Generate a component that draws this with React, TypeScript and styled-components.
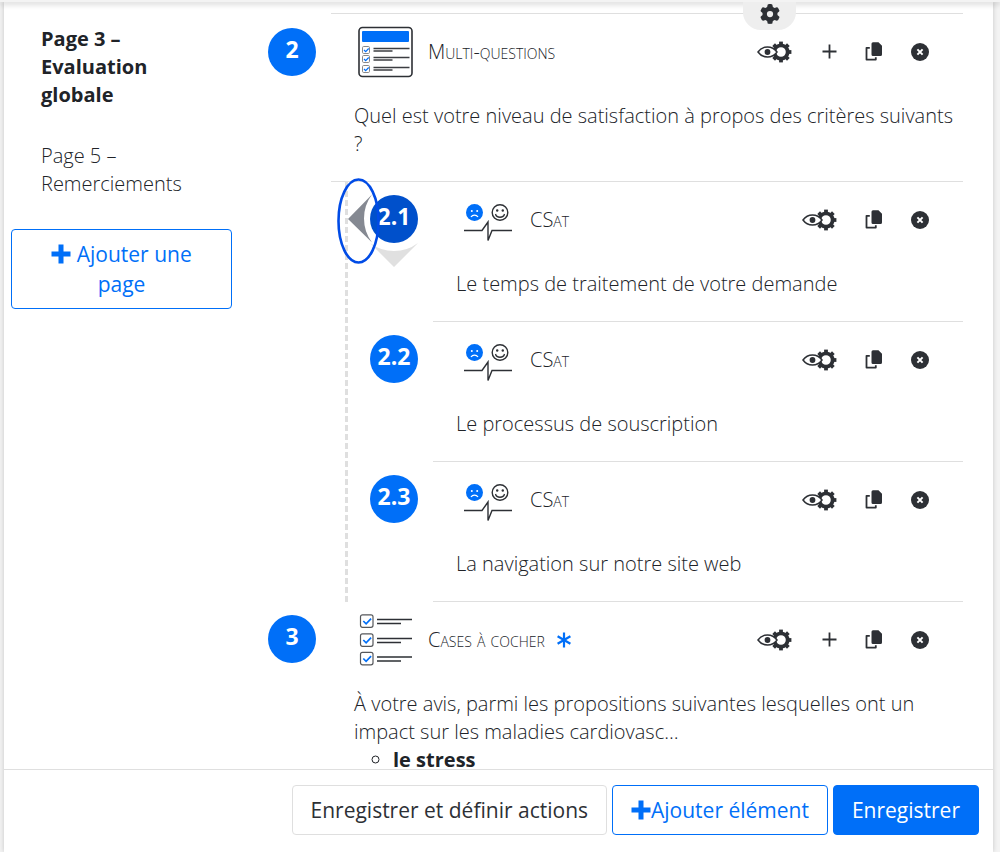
import React from 'react';
import styled, { createGlobalStyle } from 'styled-components';
import { FaGear } from 'react-icons/fa6';

const blue = '#006ff8';
const ink = '#2d3035';
const line = '#dfdfdf';

const GlobalStyle = createGlobalStyle`
  *, *::before, *::after { box-sizing: border-box; }
  body {
    margin: 0;
    background: #f3f3f3;
    color: #202328;
    font: 300 20px/28px "Open Sans", "Liberation Sans", sans-serif;
  }
  h3, p, ul, ol { margin: 0; padding: 0; }
  ol { list-style: none; }
  button { font-family: inherit; cursor: pointer; }
`;

const Shell = styled.div`
  display: flex;
  flex-direction: column;
  height: 100vh;
  overflow: hidden;
`;

const TopBar = styled.header`
  position: relative;
  z-index: 2;
  flex: none;
  height: 2px;
  background: #f3f3f3;
  box-shadow: 0 1px 6px rgba(0, 0, 0, 0.4);
`;

const Panel = styled.div`
  position: relative;
  display: flex;
  flex-direction: column;
  flex: 1;
  min-height: 0;
  margin: 0 7px 0 4px;
  background: #fff;
  box-shadow: 0 0 5px rgba(0, 0, 0, 0.18);
`;

const Body = styled.div`
  display: flex;
  flex: 1;
  min-height: 0;
  overflow: hidden;
`;

const Sidebar = styled.nav`
  flex: none;
  width: 264px;
  padding: 23px 36px 0 7px;
`;

const PageList = styled.ol`
  display: grid;
  gap: 33px;
  padding: 0 36px 0 30px;
  margin-bottom: 31px;
`;

const PageLink = styled.a<{ $current?: boolean }>`
  display: block;
  color: inherit;
  text-decoration: none;
  font-weight: ${(p) => (p.$current ? 700 : 'inherit')};
`;

const Button = styled.button<{ $kind: 'plain' | 'outline' | 'solid'; $wide?: boolean }>`
  width: ${(p) => (p.$wide ? '100%' : 'auto')};
  padding: 9px ${(p) => (p.$wide ? 30 : 18)}px;
  border: 1px solid ${(p) => (p.$kind === 'plain' ? line : blue)};
  border-radius: 4px;
  background: ${(p) => (p.$kind === 'solid' ? blue : '#fff')};
  color: ${(p) => ({ plain: ink, outline: blue, solid: '#fff' })[p.$kind]};
  font-size: 21px;
  font-weight: 400;
  line-height: 30px;
  svg { vertical-align: -2px; }
`;

const Questions = styled.main`
  flex: 1;
  min-width: 0;
  padding: 11px 30px 0 0;
`;

const Row = styled.li`
  display: grid;
  grid-template-columns: 48px minmax(0, 1fr);
  column-gap: 15px;
`;

const Badge = styled.div<{ $active?: boolean; $first?: boolean }>`
  position: relative;
  width: 48px;
  height: 48px;
  margin-top: ${(p) => (p.$first ? 15 : 13)}px;
  border-radius: 50%;
  background: ${(p) => (p.$active ? '#0050cb' : blue)};
  color: #fff;
  font-size: 23px;
  font-weight: 700;
  line-height: 42px;
  text-align: center;
`;

const Marker = styled.svg`
  position: absolute;
  left: -34px;
  top: -18px;
  overflow: visible;
`;

const Block = styled.section<{ $topLine?: boolean }>`
  padding: 0 0 23px 23px;
  border-bottom: 1px solid ${line};
  border-top: ${(p) => (p.$topLine ? `1px solid ${line}` : '0')};
`;

const BlockHead = styled.div`
  display: flex;
  align-items: center;
  height: 75px;
  margin-bottom: 13px;
  padding-right: 21px;
`;

const TypeIcon = styled.span`
  display: flex;
  justify-content: center;
  width: 64px;
  margin-right: 10px;
`;

const Title = styled.h3`
  display: flex;
  align-items: center;
  gap: 12px;
  flex: 1;
  font-size: 20px;
  font-weight: 300;
  font-variant: small-caps;
`;

const Action = styled.button<{ $wide?: boolean }>`
  display: flex;
  align-items: center;
  justify-content: center;
  width: ${(p) => (p.$wide ? 65 : 45)}px;
  height: 32px;
  padding: 0;
  border: 0;
  background: none;
  color: ${ink};
`;

const Children = styled.ol`
  margin-left: 14px;
  padding-left: 22px;
  border-left: 3px dashed ${line};
`;

const Bullets = styled.ul`
  padding-left: 39px;
  list-style: circle;
  font-weight: 700;
`;

const SettingsTab = styled.button`
  position: absolute;
  z-index: 3;
  top: 0;
  right: 197px;
  display: flex;
  justify-content: center;
  align-items: flex-start;
  width: 53px;
  height: 28px;
  padding: 2px 0 0;
  border: 0;
  border-radius: 0 0 18px 18px;
  background: #eee;
  color: ${ink};
`;

const Footer = styled.footer`
  display: flex;
  flex: none;
  justify-content: flex-end;
  gap: 5px;
  padding: 15px 14px 17px;
  border-top: 1px solid ${line};
`;

const BoldPlus = () => (
  <svg width="20" height="20" viewBox="0 0 20 20" fill="currentColor" aria-hidden="true">
    <path d="M7.500.5h5v7h7v5h-7v7h-5v-7h-7v-5h7z" />
  </svg>
);

const Asterisk = () => (
  <svg width="14" height="16" viewBox="0 0 14 16" stroke={blue} strokeWidth="2.200" role="img" aria-label="Obligatoire">
    <path d="M7 .5v15M.6 4.200l12.800 7.600M13.400 4.200L.6 11.800" />
  </svg>
);

const EyeGear = () => (
  <svg width="35" height="22" viewBox="0 0 35 22" fill="none" aria-hidden="true">
    <g transform="translate(24 11)" stroke={ink}>
      <circle r="6.700" strokeWidth="3.800" />
      {[0, 45, 90, 135, 180, 225, 270, 315].map((a) => (
        <path key={a} d="M0-7V-10.400" strokeWidth="3.800" transform={`rotate(${a})`} />
      ))}
    </g>
    <path d="M1 11C5.800 4.300 15.200 4.300 20 11C15.200 17.700 5.800 17.700 1 11z" fill="#fff" stroke={ink} strokeWidth="1.500" />
    <circle cx="10.500" cy="11" r="2.900" fill={ink} />
  </svg>
);

const ThinPlus = () => (
  <svg width="15" height="15" viewBox="0 0 15 15" stroke="currentColor" strokeWidth="1.800" aria-hidden="true">
    <path d="M7.500.5v14M.5 7.500h14" />
  </svg>
);

const Copy = () => (
  <svg width="19" height="19" viewBox="0 0 19 19" aria-hidden="true">
    <path d="M8 .3h5.500L17 3.800v8.700a1.500 1.500 0 0 1-1.500 1.500H8a1.500 1.500 0 0 1-1.500-1.500V1.800A1.500 1.500 0 0 1 8 .3z" fill="currentColor" />
    <path d="M4.800 5.800H1.500v11.800h9.300v-2.300" fill="none" stroke="currentColor" strokeWidth="1.800" strokeLinejoin="round" />
  </svg>
);

const Remove = () => (
  <svg width="18" height="18" viewBox="0 0 18 18" aria-hidden="true">
    <circle cx="9" cy="9" r="9" fill="currentColor" />
    <path d="M6.400 6.400l5.200 5.200M11.600 6.400l-5.200 5.200" stroke="#fff" strokeWidth="2" />
  </svg>
);

const MultiIcon = () => (
  <svg width="56" height="52" viewBox="0 0 56 52" fill="none" aria-hidden="true">
    <rect x="1" y="1.500" width="53" height="49" rx="3.500" stroke={ink} strokeWidth="1.600" />
    <rect x="4" y="5" width="47" height="11" rx="1" fill={blue} />
    {[20, 29, 39].map((y) => (
      <g key={y}>
        <rect x="4.500" y={y + 0.5} width="7" height="7" rx="1.200" stroke="#888" />
        <path d={`M6 ${y + 4}l1.700 1.700l3-3.200`} stroke={blue} strokeWidth="1.200" />
        <path d={`M15.500 ${y + 2.5}h36M15.500 ${y + 5}h19`} stroke="#3c3e42" strokeWidth="1.300" />
      </g>
    ))}
  </svg>
);

const CheckIcon = () => (
  <svg width="54" height="52" viewBox="0 0 54 52" fill="none" aria-hidden="true">
    {[0.5, 19.5, 38].map((y) => (
      <g key={y}>
        <rect x="1.500" y={y + 0.300} width="12.500" height="12.500" rx="2" stroke="#55575b" strokeWidth="1.200" />
        <path d={`M4.300 ${y + 6.500}l2.800 2.800l5-5.200`} stroke={blue} strokeWidth="1.700" />
        <path d={`M18 ${y + 5}h35M18 ${y + 9}h24`} stroke={ink} strokeWidth="1.400" />
      </g>
    ))}
  </svg>
);

const CsatIcon = () => (
  <svg width="48" height="44" viewBox="0 0 48 44" fill="none" aria-hidden="true">
    <circle cx="10.500" cy="14.500" r="8.500" fill={blue} />
    <g fill="#fff"><circle cx="7.800" cy="13" r="1" /><circle cx="13.200" cy="13" r="1" /></g>
    <path d="M7 19c1.600-2.500 5.400-2.500 7 0" stroke="#fff" strokeWidth="1.200" />
    <circle cx="36" cy="14.500" r="7.800" stroke={ink} strokeWidth="1.400" />
    <g fill={ink}><circle cx="33.200" cy="12.500" r="1.200" /><circle cx="38.800" cy="12.500" r="1.200" /></g>
    <path d="M31.500 16c1 4.300 8 4.300 9 0" stroke={ink} strokeWidth="1.300" />
    <path d="M0 32.500h18l6-8.500v18.500l4-10h20" stroke={ink} strokeWidth="1.400" />
  </svg>
);

const MoveMarker = () => (
  <Marker width="84" height="92" viewBox="0 0 84 92" fill="none" aria-hidden="true">
    <path d="M12 42L36 17.500A40 40 0 0 0 36 65.500z" fill="#858992" />
    <path d="M58 90L34 66A40 40 0 0 0 82 66z" fill="#e0e0e0" />
    <ellipse cx="22.500" cy="44" rx="20" ry="41.500" stroke="#004be6" strokeWidth="2.600" />
  </Marker>
);

interface BlockProps {
  title: string;
  text: string;
  icon: React.ReactNode;
  canAdd?: boolean;
  required?: boolean;
  topLine?: boolean;
  children?: React.ReactNode;
}

const QuestionBlock = ({ title, text, icon, canAdd, required, topLine, children }: BlockProps) => (
  <Block $topLine={topLine}>
    <BlockHead>
      <TypeIcon>{icon}</TypeIcon>
      <Title>{title}{required && <Asterisk />}</Title>
      <Action type="button" $wide aria-label="Conditions d'affichage"><EyeGear /></Action>
      {canAdd && <Action type="button" aria-label="Ajouter"><ThinPlus /></Action>}
      <Action type="button" aria-label="Dupliquer"><Copy /></Action>
      <Action type="button" aria-label="Supprimer"><Remove /></Action>
    </BlockHead>
    <p>{text}</p>
    {children}
  </Block>
);

const criteria = [
  'Le temps de traitement de votre demande',
  'Le processus de souscription',
  'La navigation sur notre site web',
];

export default function App() {
  return (
    <Shell>
      <GlobalStyle />
      <TopBar />
      <Panel>
        <SettingsTab type="button" aria-label="Paramètres"><FaGear size={20} /></SettingsTab>
        <Body>
          <Sidebar>
            <PageList>
              <li><PageLink href="#page-3" $current>Page 3 – Evaluation globale</PageLink></li>
              <li><PageLink href="#page-5">Page 5 – Remerciements</PageLink></li>
            </PageList>
            <Button type="button" $kind="outline" $wide><BoldPlus /> Ajouter une page</Button>
          </Sidebar>
          <Questions>
            <ol>
              <Row>
                <Badge $first>2</Badge>
                <div>
                  <QuestionBlock
                    title="Multi-questions"
                    text="Quel est votre niveau de satisfaction à propos des critères suivants ?"
                    icon={<MultiIcon />}
                    canAdd
                    topLine
                  />
                  <Children>
                    {criteria.map((text, i) => (
                      <Row key={text}>
                        <Badge $active={i === 0}>
                          2.{i + 1}
                          {i === 0 && <MoveMarker />}
                        </Badge>
                        <QuestionBlock title="CSat" text={text} icon={<CsatIcon />} />
                      </Row>
                    ))}
                  </Children>
                </div>
              </Row>
              <Row>
                <Badge>3</Badge>
                <QuestionBlock
                  title="Cases à cocher"
                  text="À votre avis, parmi les propositions suivantes lesquelles ont un impact sur les maladies cardiovasc…"
                  icon={<CheckIcon />}
                  canAdd
                  required
                >
                  <Bullets><li>le stress</li></Bullets>
                </QuestionBlock>
              </Row>
            </ol>
          </Questions>
        </Body>
        <Footer>
          <Button type="button" $kind="plain">Enregistrer et définir actions</Button>
          <Button type="button" $kind="outline"><BoldPlus />Ajouter élément</Button>
          <Button type="button" $kind="solid">Enregistrer</Button>
        </Footer>
      </Panel>
    </Shell>
  );
}
